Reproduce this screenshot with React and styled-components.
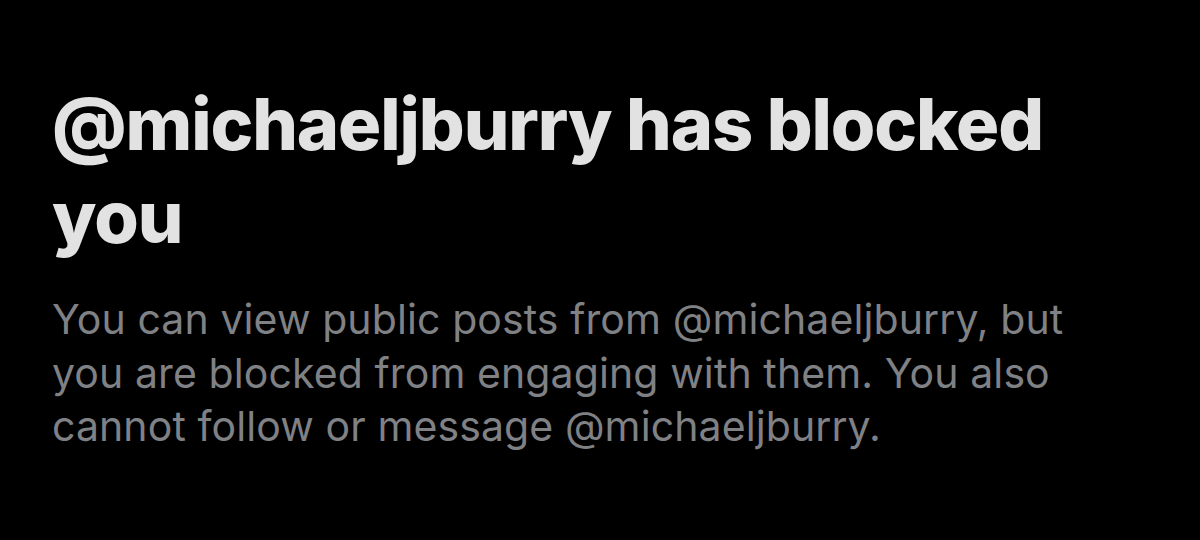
import React from 'react';
import styled, { createGlobalStyle } from 'styled-components';

const GlobalStyle = createGlobalStyle`
  html, body {
    margin: 0;
    padding: 0;
    background: #000000;
  }
  body {
    width: 1200px;
    height: 540px;
    overflow: hidden;
  }
`;

export const StyledScreen = styled.div`
  box-sizing: border-box;
  width: 1200px;
  height: 540px;
  padding: 77px 60px 0 52px;
  background-color: #000000;
  font-family: Inter, "Liberation Sans", sans-serif;
`;

export const StyledTitle = styled.h1`
  margin: 0;
  width: 1060px;
  font-size: 72px;
  line-height: 93px;
  font-weight: 800;
  letter-spacing: -1.1px;
  color: #e2e2e2;
`;

export const StyledText = styled.p`
  margin: 30px 0 0 0;
  width: 1040px;
  font-size: 41px;
  line-height: 53.5px;
  font-weight: 400;
  letter-spacing: 0.1px;
  color: #7f8185;
`;

const handle = '@michaeljburry';

const App = () => {
    return (
        <>
            <GlobalStyle />
            <StyledScreen>
                <StyledTitle>{handle} has blocked you</StyledTitle>
                <StyledText>
                    You can view public posts from {handle}, but you are blocked from
                    engaging with them. You also cannot follow or message {handle}.
                </StyledText>
            </StyledScreen>
        </>
    );
}

export default App;
